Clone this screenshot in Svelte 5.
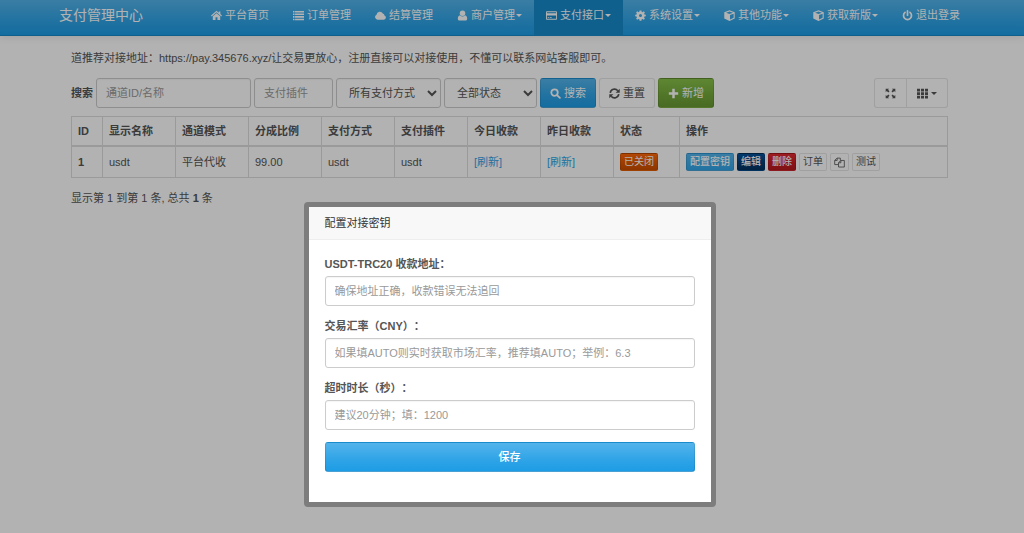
<script lang="ts">
    interface NavItem {
        icon: string;
        label: string;
        caret?: boolean;
        active?: boolean;
    }

    const navItems: NavItem[] = [
        { icon: 'home', label: '平台首页' },
        { icon: 'list', label: '订单管理' },
        { icon: 'cloud', label: '结算管理' },
        { icon: 'user', label: '商户管理', caret: true },
        { icon: 'card', label: '支付接口', caret: true, active: true },
        { icon: 'cog', label: '系统设置', caret: true },
        { icon: 'cube', label: '其他功能', caret: true },
        { icon: 'cube', label: '获取新版', caret: true },
        { icon: 'power', label: '退出登录' }
    ];

    const columns = [
        { label: 'ID', cls: 'c-id' },
        { label: '显示名称', cls: 'c-md' },
        { label: '通道模式', cls: 'c-md' },
        { label: '分成比例', cls: 'c-md' },
        { label: '支付方式', cls: 'c-md' },
        { label: '支付插件', cls: 'c-md' },
        { label: '今日收款', cls: 'c-md' },
        { label: '昨日收款', cls: 'c-md' },
        { label: '状态', cls: 'c-state' },
        { label: '操作', cls: 'c-ops' }
    ];

    const rows = [
        { id: 1, name: 'usdt', mode: '平台代收', rate: '99.00', type: 'usdt', plugin: 'usdt' }
    ];

    const fields = [
        { id: 'address', label: 'USDT-TRC20 收款地址：', placeholder: '确保地址正确，收款错误无法追回' },
        { id: 'cny', label: '交易汇率（CNY）：', placeholder: '如果填AUTO则实时获取市场汇率，推荐填AUTO；举例：6.3' },
        { id: 'timeout', label: '超时时长（秒）：', placeholder: '建议20分钟；填：1200' }
    ];

    let values = $state<Record<string, string>>({ address: '', cny: '', timeout: '' });
    let keyword = $state('');
    let plugin = $state('');

    function reset() {
        keyword = '';
        plugin = '';
    }
</script>

{#snippet icon(name: string)}
    <svg class="icon" viewBox="0 0 16 16" fill="currentColor" aria-hidden="true">
        {#if name === 'home'}
            <path d="M8 4.6 2.6 9.1V14.6h4v-4h2.8v4h4V9.1z" />
            <path d="M8 1 0 8l1.100 1.300L8 3.400l6.900 5.900L16 8l-2.400-2.100V2h-2.200v2z" />
        {:else if name === 'list'}
            <path d="M0 1.500h2.200v2.200H0zM3 1.500h13v2.200H3zM0 5.200h2.200v2.200H0zM3 5.200h13v2.200H3zM0 8.900h2.200v2.200H0zM3 8.900h13v2.200H3zM0 12.600h2.200v2.200H0zM3 12.600h13v2.200H3z" />
        {:else if name === 'cloud'}
            <path d="M3.800 14a3.800 3.800 0 0 1-1.600-7.200A4.900 4.900 0 0 1 11.400 5.200 3 3 0 0 1 13.800 8 3.100 3.100 0 0 1 13 14z" />
        {:else if name === 'user'}
            <circle cx="8" cy="4.600" r="4" />
            <path d="M4.400 7.600C2 8 1.200 10.200 1.200 12.600c0 1.500 1 2.600 2.400 2.600h8.800c1.400 0 2.400-1.100 2.400-2.600 0-2.400-.8-4.600-3.200-5A5 5 0 0 1 4.400 7.600z" />
        {:else if name === 'card'}
            <path fill-rule="evenodd" d="M1.400 1.800h13.200c.8 0 1.400.6 1.400 1.400v9.600c0 .8-.6 1.400-1.400 1.400H1.400C.6 14.200 0 13.600 0 12.800V3.200c0-.8.6-1.400 1.400-1.400zM1.300 3.100v1.600h13.400V3.100zM1.300 8v4.900h13.400V8zM2.400 10.600h2v1.200h-2zM5.300 10.600h3v1.200h-3z" />
        {:else if name === 'cog'}
            <path fill-rule="evenodd" d="m6.700.6-.4 2-1.300.5-1.700-1.200-1.700 1.700 1.200 1.700-.5 1.300-2 .4v2.200l2 .4.5 1.300-1.200 1.700 1.700 1.700L5 13.100l1.300.5.4 2h2.600l.4-2 1.300-.5 1.700 1.200 1.700-1.700-1.200-1.700.5-1.300 2-.4V7l-2-.4-.5-1.300 1.200-1.700-1.700-1.700L11 3.100l-1.300-.5-.4-2zM8 5.900a2.200 2.200 0 1 1 0 4.400 2.200 2.200 0 0 1 0-4.400z" />
        {:else if name === 'cube'}
            <path fill-rule="evenodd" d="M8 .4 15.600 3.300v9L8 15.900.4 12.300v-9zM8 2 3 3.900l5 1.900 5-1.900zM8.800 7.400v6.300l5.200-2.500V5.400z" />
        {:else if name === 'power'}
            <path d="M4.400 3.500a5.800 5.800 0 1 0 7.200 0M8 1.300v6.200" fill="none" stroke="currentColor" stroke-width="2.500" stroke-linecap="round" />
        {:else if name === 'search'}
            <path d="M6.600 1.900a4.700 4.700 0 1 0 0 9.400 4.700 4.700 0 0 0 0-9.400M10.200 10.200l4.200 4.200" fill="none" stroke="currentColor" stroke-width="2.600" stroke-linecap="round" />
        {:else if name === 'refresh'}
            <path d="M1.800 7A6.200 6.200 0 0 1 12.800 4M14.200 9A6.200 6.200 0 0 1 3.200 12" fill="none" stroke="currentColor" stroke-width="2.400" />
            <path d="M15.600 1v6H9.600zM.4 15V9h6z" />
        {:else if name === 'plus'}
            <path d="M6.200 1.200h3.600v5h5v3.600h-5v5H6.200v-5h-5V6.200h5z" />
        {:else if name === 'expand'}
            <path d="M1 1h5L4.400 2.600l2.200 2.200-1.800 1.800-2.200-2.200L1 6zM15 1v5l-1.600-1.600-2.200 2.200-1.800-1.800 2.200-2.200L10 1zM1 15v-5l1.600 1.600 2.200-2.200 1.800 1.800-2.200 2.200L6 15zM15 15h-5l1.600-1.600-2.200-2.200 1.800-1.800 2.200 2.200L15 10z" />
        {:else if name === 'grid'}
            <path d="M0 1h4.400v4H0zM5.800 1h4.400v4H5.800zM11.600 1H16v4h-4.400zM0 6.200h4.400v4H0zM5.800 6.200h4.400v4H5.800zM11.600 6.200H16v4h-4.400zM0 11.400h4.400v4H0zM5.800 11.400h4.400v4H5.800zM11.600 11.400H16v4h-4.400z" />
        {:else if name === 'copy'}
            <path d="M6.200 11H1V5l3.400-3.400h4.800V5M4.600 1.800V5H1.200M6.600 8.200 10 5h5v9.600H6.600zM10 5.200v3.200H6.800" fill="none" stroke="currentColor" stroke-width="1.200" />
        {/if}
    </svg>
{/snippet}

<header class="navbar">
    <a class="brand" href="#home">支付管理中心</a>
    <nav>
        {#each navItems as item}
            <a href="#nav" class:active={item.active}>
                {@render icon(item.icon)}
                <span class="label">{item.label}</span>
                {#if item.caret}<i class="caret"></i>{/if}
            </a>
        {/each}
    </nav>
</header>

<main>
    <p class="notice">道推荐对接地址：https://pay.345676.xyz/让交易更放心，注册直接可以对接使用，不懂可以联系网站客服即可。</p>

    <div class="toolbar">
        <label for="keyword">搜索</label>
        <input id="keyword" class="control keyword" placeholder="通道ID/名称" bind:value={keyword} />
        <input class="control plugin" aria-label="支付插件" placeholder="支付插件" bind:value={plugin} />
        <select class="control type" aria-label="支付方式">
            <option>所有支付方式</option>
        </select>
        <select class="control status" aria-label="状态">
            <option>全部状态</option>
        </select>
        <button type="button" class="btn primary">{@render icon('search')}搜索</button>
        <button type="button" class="btn" onclick={reset}>{@render icon('refresh')}重置</button>
        <button type="button" class="btn success">{@render icon('plus')}新增</button>
        <div class="btn-group">
            <button type="button" class="btn" aria-label="全屏">{@render icon('expand')}</button>
            <button type="button" class="btn" aria-label="列">{@render icon('grid')}<i class="caret"></i></button>
        </div>
    </div>

    <table>
        <thead>
            <tr>
                {#each columns as col}
                    <th class={col.cls}>{col.label}</th>
                {/each}
            </tr>
        </thead>
        <tbody>
            {#each rows as row}
                <tr>
                    <td><b>{row.id}</b></td>
                    <td>{row.name}</td>
                    <td>{row.mode}</td>
                    <td>{row.rate}</td>
                    <td>{row.type}</td>
                    <td>{row.plugin}</td>
                    <td><a href="#today">[刷新]</a></td>
                    <td><a href="#yesterday">[刷新]</a></td>
                    <td><button type="button" class="btn xs warning">已关闭</button></td>
                    <td>
                        <div class="ops">
                            <button type="button" class="btn xs info">配置密钥</button>
                            <button type="button" class="btn xs edit">编辑</button>
                            <button type="button" class="btn xs danger">删除</button>
                            <button type="button" class="btn xs">订单</button>
                            <button type="button" class="btn xs" aria-label="复制">{@render icon('copy')}</button>
                            <button type="button" class="btn xs">测试</button>
                        </div>
                    </td>
                </tr>
            {/each}
        </tbody>
    </table>

    <p class="summary">显示第 1 到第 1 条, 总共 <b>1</b> 条</p>
</main>

<div class="backdrop">
    <div class="dialog" role="dialog" aria-modal="true" aria-labelledby="dialog-title">
        <h2 id="dialog-title">配置对接密钥</h2>
        <form onsubmit={(e) => e.preventDefault()}>
            {#each fields as field}
                <div class="field">
                    <label for={field.id}>{field.label}</label>
                    <input id={field.id} class="control" placeholder={field.placeholder} bind:value={values[field.id]} />
                </div>
            {/each}
            <button type="submit" class="btn primary block">保存</button>
        </form>
    </div>
</div>

<style>
    :global(body) {
        margin: 0;
        background: #fff;
        color: #555;
        font: 11px/16px "Liberation Sans", "Noto Sans CJK SC", sans-serif;
        text-spacing-trim: space-all;
    }

    a {
        color: #2fa4e7;
        text-decoration: none;
    }
    p {
        margin: 0;
    }
    .icon {
        width: 11px;
        height: 11px;
        flex: none;
    }
    .caret {
        border: 3px solid transparent;
        border-top-color: currentColor;
        border-bottom: 0;
    }

    /* Navbar */
    .navbar {
        display: flex;
        justify-content: space-between;
        height: 35px;
        padding: 0 52px 0 59px;
        border-bottom: 1px solid #178acc;
        background: linear-gradient(#54b4eb, #2fa4e7 60%, #1d9ce5);
        box-shadow: 0 1px 8px rgba(0, 0, 0, 0.1);
    }
    .navbar a {
        display: flex;
        align-items: center;
        padding-bottom: 5px;
        color: #fff;
        white-space: nowrap;
    }
    .navbar .brand {
        font-size: 14px;
    }
    nav {
        display: flex;
    }
    nav a {
        gap: 1px;
        padding: 0 12px;
    }
    nav .label {
        padding-left: 2px;
    }
    nav .active {
        background: #178acc;
    }

    main {
        padding: 14px 76px 0 71px;
    }
    .notice {
        margin-bottom: 12px;
    }

    /* Controls */
    .control {
        box-sizing: border-box;
        height: 30px;
        padding: 0 9px;
        border: 1px solid #ccc;
        border-radius: 3px;
        background: #fff;
        box-shadow: inset 0 1px 1px rgba(0, 0, 0, 0.04);
        color: #555;
        font: inherit;
    }
    select.control {
        padding: 0 8px;
    }
    .control::placeholder {
        color: #999;
    }
    .btn {
        display: inline-flex;
        align-items: center;
        justify-content: center;
        gap: 3px;
        box-sizing: border-box;
        height: 30px;
        padding: 0 9px;
        border: 1px solid rgba(0, 0, 0, 0.1);
        border-radius: 3px;
        background: #fff;
        color: #555;
        font: inherit;
        white-space: nowrap;
        cursor: pointer;
    }
    .primary {
        background: linear-gradient(#54b4eb, #2fa4e7 60%, #1d9ce5);
        color: #fff;
    }
    .success {
        background: linear-gradient(#88c149, #73a839 60%, #699934);
        color: #fff;
    }
    .xs {
        height: 18px;
        padding: 0 3px;
        border-radius: 2px;
        font-size: 10px;
        line-height: 16px;
    }
    .warning {
        background: linear-gradient(#ff6707, #dd5600 60%, #c94e00);
        color: #fff;
    }
    .info {
        background: linear-gradient(#54b4eb, #2fa4e7);
        color: #fff;
    }
    .edit {
        background: linear-gradient(#04519b, #033c73 60%, #02325f);
        color: #fff;
    }
    .danger {
        background: linear-gradient(#e12b31, #c71c22 60%, #b5191f);
        color: #fff;
    }
    .block,
    .info,
    .edit,
    .danger {
        font-weight: 500;
    }

    .toolbar {
        display: flex;
        align-items: center;
        gap: 3px;
        margin-bottom: 8px;
    }
    .toolbar label,
    .field label {
        font-weight: bold;
    }
    .keyword {
        width: 155px;
    }
    .plugin {
        width: 79px;
    }
    .type {
        width: 105px;
    }
    .status {
        width: 93px;
    }
    .btn-group {
        display: flex;
        margin-left: auto;
    }
    .btn-group .btn {
        padding: 0 10px;
    }
    .btn-group .btn:first-child {
        border-radius: 3px 0 0 3px;
    }
    .btn-group .btn:last-child {
        border-left: 0;
        border-radius: 0 3px 3px 0;
    }

    /* Table */
    table {
        width: 100%;
        border-collapse: collapse;
        table-layout: fixed;
    }
    th,
    td {
        height: 16px;
        padding: 6px;
        border: 1px solid #ddd;
        text-align: left;
    }
    th {
        border-bottom-width: 2px;
    }
    td .btn {
        vertical-align: top;
    }
    .c-id {
        width: 18px;
    }
    .c-md {
        width: 60px;
    }
    .c-state {
        width: 53px;
    }
    .c-ops {
        width: auto;
    }
    .ops {
        display: flex;
        gap: 3px;
    }
    .summary {
        margin-top: 12px;
    }

    /* Dialog */
    .backdrop {
        position: fixed;
        inset: 0;
        display: flex;
        align-items: flex-start;
        justify-content: center;
        padding: 202px 5px 0 0;
        background: rgba(0, 0, 0, 0.3);
    }
    .dialog {
        width: 402px;
        border: 5px solid #7d7d7d;
        border-radius: 4px;
        background: #fff;
    }
    .dialog h2 {
        margin: 0;
        padding: 8px 16px;
        border-bottom: 1px solid #eee;
        background: #f8f8f8;
        color: #333;
        font-size: 11px;
        font-weight: normal;
    }
    form {
        padding: 16px 16px 30px;
    }
    .field {
        display: flex;
        flex-direction: column;
        gap: 4px;
        margin-bottom: 12px;
    }
    .block {
        width: 100%;
    }
</style>
